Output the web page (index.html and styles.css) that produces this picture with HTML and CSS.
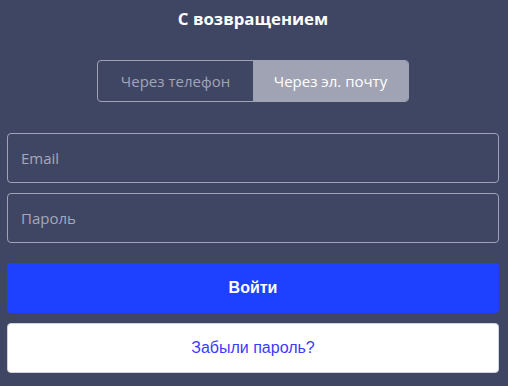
FILE: index.html
```html
<!DOCTYPE html>
<html lang="ru">
<head>
<meta charset="utf-8">
<link rel="stylesheet" href="styles.css">
</head>
<body>
<div class="page">
  <h1 class="title">С возвращением</h1>
  <div class="tabs">
    <div class="tab">Через телефон</div>
    <div class="tab active">Через эл. почту</div>
  </div>
  <div class="fields">
    <div class="field">Email</div>
    <div class="field">Пароль</div>
  </div>
  <div class="actions">
    <div class="btn primary">Войти</div>
    <div class="btn secondary">Забыли пароль?</div>
  </div>
</div>
</body>
</html>
```
FILE: styles.css
```css
html, body {
  margin: 0;
  padding: 0;
  background: #3f4663;
}
body {
  width: 508px;
  height: 386px;
  overflow: hidden;
}
.page {
  width: 492px;
  margin-left: 7px;
  display: flex;
  flex-direction: column;
  font-family: "Open Sans", "Noto Sans", sans-serif;
}
.title {
  margin: 0;
  height: 38px;
  line-height: 38px;
  text-align: center;
  color: #ffffff;
  font-size: 16.8px;
  font-weight: 700;
}
.tabs {
  margin: 22px auto 0;
  width: 312px;
  height: 42px;
  box-sizing: border-box;
  border: 1px solid #a0a3b3;
  border-radius: 4px;
  overflow: hidden;
  display: flex;
}
.tab {
  flex: 1;
  display: flex;
  align-items: center;
  justify-content: center;
  font-size: 15px;
  color: #a2a5b5;
}
.tab.active {
  background: #a0a3b3;
  color: #ffffff;
}
.fields {
  margin-top: 31px;
  display: flex;
  flex-direction: column;
  gap: 10px;
}
.field {
  height: 50px;
  box-sizing: border-box;
  border: 1px solid #a0a3b8;
  border-radius: 4px;
  padding-left: 13px;
  display: flex;
  align-items: center;
  font-size: 15px;
  color: #a6a9b9;
}
.actions {
  margin-top: 20px;
  display: flex;
  flex-direction: column;
  gap: 10px;
}
.btn {
  height: 50px;
  box-sizing: border-box;
  border-radius: 4px;
  display: flex;
  align-items: center;
  justify-content: center;
  font-family: "Liberation Sans", Arial, sans-serif;
  font-size: 16px;
}
.primary {
  background: #1e40ff;
  color: #ffffff;
  font-weight: 700;
}
.secondary {
  background: #ffffff;
  border: 1px solid #cfd2dc;
  color: #3b3bff;
}
```
